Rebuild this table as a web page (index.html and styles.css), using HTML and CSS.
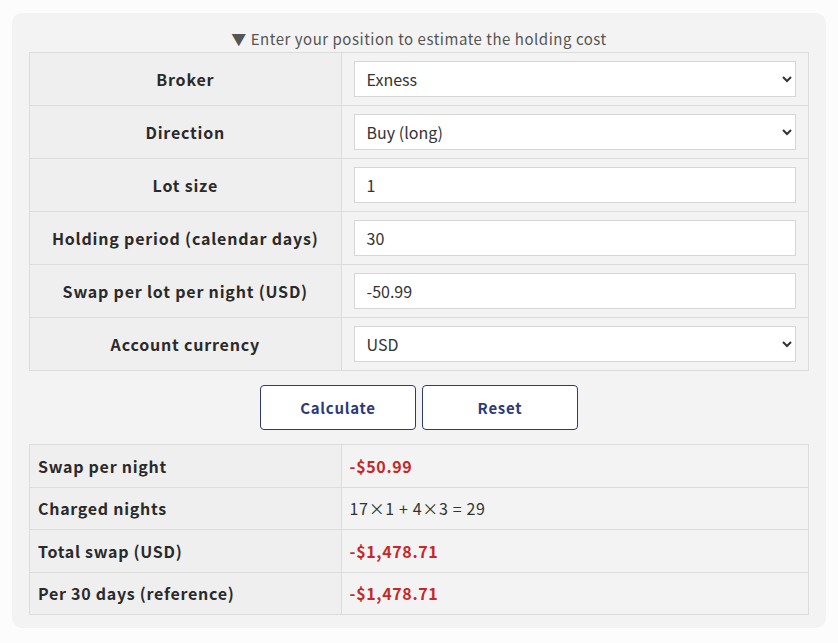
FILE: index.html
```html
<!DOCTYPE html>
<html lang="en">
<head>
<meta charset="utf-8">
<title>Swap calculator</title>
<link rel="stylesheet" href="styles.css">
</head>
<body>
<div class="calc">
  <div class="caption">▼ Enter your position to estimate the holding cost</div>
  <table class="form">
    <tr><th>Broker</th><td><select class="field"><option>Exness</option></select></td></tr>
    <tr><th>Direction</th><td><select class="field"><option>Buy (long)</option></select></td></tr>
    <tr><th>Lot size</th><td><input class="field" type="text" value="1"></td></tr>
    <tr><th>Holding period (calendar days)</th><td><input class="field" type="text" value="30"></td></tr>
    <tr><th>Swap per lot per night (USD)</th><td><input class="field" type="text" value="-50.99"></td></tr>
    <tr><th>Account currency</th><td><select class="field"><option>USD</option></select></td></tr>
  </table>
  <div class="actions">
    <button class="btn">Calculate</button>
    <button class="btn">Reset</button>
  </div>
  <table class="result">
    <tr><th>Swap per night</th><td class="neg">-$50.99</td></tr>
    <tr><th>Charged nights</th><td>17×1 + 4×3 = 29</td></tr>
    <tr><th>Total swap (USD)</th><td class="neg">-$1,478.71</td></tr>
    <tr><th>Per 30 days (reference)</th><td class="neg">-$1,478.71</td></tr>
  </table>
</div>
</body>
</html>
```

FILE: styles.css
```css
html, body {
  margin: 0;
  background: #fcfcfc;
}
body {
  padding: 13px 12px 0 12px;
  font-family: "Noto Sans CJK JP", "Noto Sans", sans-serif;
  color: #333;
}
.calc {
  background: #f3f3f3;
  border-radius: 10px;
  padding: 13px 17px 13px 17px;
}
.caption {
  text-align: center;
  font-size: 15px;
  line-height: 25px;
  margin-bottom: 1px;
  color: #555;
  letter-spacing: 0.035em;
}
table {
  width: 100%;
  border-collapse: collapse;
  border: 1px solid #dcdcdc;
}
th, td {
  border: 1px solid #dcdcdc;
}
.form th {
  width: 40%;
  background: #efefef;
  font-size: 16px;
  font-weight: 700;
  letter-spacing: 0.05em;
  color: #2a2a2a;
  text-align: center;
  padding: 0 8px;
  height: 52px;
  box-sizing: border-box;
}
.form td {
  background: #f3f3f3;
  padding: 8px 12px;
  height: 52px;
  box-sizing: border-box;
}
.field {
  display: block;
  width: 100%;
  height: 36px;
  box-sizing: border-box;
  border: 1px solid #d6d6d6;
  border-radius: 0;
  background: #fff;
  font-family: inherit;
  font-size: 16px;
  color: #333;
  padding: 0 12px;
  margin: 0;
}
select.field {
  padding: 0 8px;
}
.actions {
  display: flex;
  justify-content: center;
  gap: 6px;
  margin: 14px 0 14px;
}
.btn {
  width: 156px;
  height: 45px;
  background: #fff;
  border: 1px solid #2e3a78;
  border-radius: 4px;
  color: #2e3a78;
  font-family: inherit;
  font-size: 15px;
  font-weight: 700;
  letter-spacing: 0.05em;
  cursor: pointer;
}
.result th {
  width: 40%;
  background: #efefef;
  text-align: left;
  font-size: 16px;
  font-weight: 700;
  letter-spacing: 0.045em;
  color: #2a2a2a;
  padding: 0 8px;
  height: 41.5px;
}
.result td {
  background: #f3f3f3;
  font-size: 16px;
  padding: 0 8px;
  height: 41.5px;
  color: #333;
  letter-spacing: 0.04em;
}
.result td.neg {
  color: #c62828;
  font-weight: 700;
}
```
